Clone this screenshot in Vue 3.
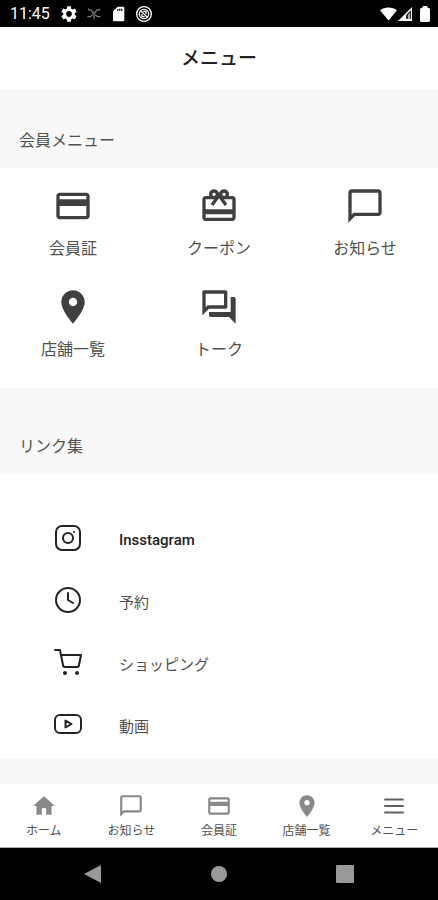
<template>
  <div class="screen">
    <div class="status-bar">
      <span class="time">11:45</span>
      <svg class="status-icon" viewBox="2 2 20 20">
        <path :d="icons.gear" />
      </svg>
      <svg class="status-icon dim" viewBox="0 0 24 24">
        <path d="M3 4l3 3M21 4l-3 3M7 5l5 7 5-7M12 12v8M2 16h5l3-3M22 16h-5l-3-3" fill="none" stroke="currentColor" stroke-width="2" />
      </svg>
      <svg class="status-icon" viewBox="0 0 24 24">
        <path d="M18 1h-8L3 8v13c0 1 1 2 2 2h13c1 0 2-1 2-2V3c0-1-1-2-2-2zM11 7H9V5h2zm3 0h-2V4h2zm3 0h-2V4h2z" />
      </svg>
      <svg class="status-icon ring" viewBox="0 0 24 24" fill="none" stroke="currentColor" stroke-width="2">
        <circle cx="12" cy="12" r="11" />
        <circle cx="12" cy="12" r="7" />
        <path d="M7 7l10 10M11 8h4v4M9 12v4h4" />
      </svg>
      <div class="signals">
        <svg class="wifi" viewBox="0 0 18 14">
          <path d="M9 14L0 3C5-1 13-1 18 3z" />
        </svg>
        <svg class="cell" viewBox="0 0 15 14">
          <path d="M0 14L14 0v14z" />
          <path d="M8 12V8l5-5v9z" fill="#333333" />
          <path d="M10 12V8l2-2v6z" fill="#aaaaaa" />
        </svg>
        <svg class="battery" viewBox="0 0 10 16">
          <path d="M3 0h4l1 2h1l1 1v12l-1 1H1l-1-1V3l1-1h1z" />
        </svg>
      </div>
    </div>

    <header class="header">
      <h1>メニュー</h1>
    </header>

    <main>
      <h2 class="section-title">会員メニュー</h2>
      <div class="menu-grid">
        <button v-for="item in menuItems" :key="item.label" type="button" class="menu-item">
          <svg viewBox="0 0 24 24"><path :d="icons[item.icon]" /></svg>
          <span>{{ item.label }}</span>
        </button>
      </div>

      <h2 class="section-title links-title">リンク集</h2>
      <ul class="link-list">
        <li v-for="link in links" :key="link.label">
          <a href="#" :class="{ latin: link.icon === 'instagram' }">
            <svg v-if="link.icon === 'instagram'" viewBox="0 0 28 28">
              <rect x="2" y="2" width="24" height="24" rx="6" />
              <circle cx="14" cy="14" r="5" />
              <circle class="dot" cx="20" cy="8" r="1" />
            </svg>
            <svg v-else-if="link.icon === 'clock'" viewBox="0 0 28 28">
              <circle cx="14" cy="14" r="12" />
              <path d="M14 7v7l5 3" />
            </svg>
            <svg v-else-if="link.icon === 'cart'" viewBox="0 0 28 28">
              <path d="M1 2h5l3 15c0 1 1 2 2 2h12c1 0 2-1 2-2l2-10H8" />
              <circle class="dot" cx="11" cy="25" r="2" />
              <circle class="dot" cx="23" cy="25" r="2" />
            </svg>
            <svg v-else viewBox="0 0 28 28">
              <rect x="1" y="5" width="26" height="18" rx="5" />
              <path d="M11.5 10.5v7l6-3.5z" />
            </svg>
            <span>{{ link.label }}</span>
          </a>
        </li>
      </ul>
    </main>

    <nav class="tab-bar">
      <button v-for="tab in tabs" :key="tab.label" type="button" :class="{ active: tab.icon === 'menu' }">
        <svg viewBox="0 0 24 24"><path :d="icons[tab.icon]" /></svg>
        <span>{{ tab.label }}</span>
      </button>
    </nav>

    <div class="system-nav">
      <button type="button" aria-label="戻る">
        <svg viewBox="0 0 18 18"><path d="M0 9L17 0v18z" /></svg>
      </button>
      <button type="button" aria-label="ホーム画面">
        <svg viewBox="0 0 18 18"><circle cx="9" cy="9" r="8" /></svg>
      </button>
      <button type="button" aria-label="アプリ履歴">
        <svg viewBox="0 0 18 18"><rect width="18" height="18" rx="1" /></svg>
      </button>
    </div>
  </div>
</template>

<script setup>
// アイコンのパス (24x24)
const icons = {
  gear: "M19.14 12.94c.04-.3.06-.61.06-.94s-.02-.64-.07-.94l2.03-1.58c.18-.14.23-.41.12-.61l-1.92-3.32c-.12-.22-.37-.29-.59-.22l-2.39.96c-.5-.38-1.03-.7-1.62-.94L14.4 2.81c-.04-.24-.24-.41-.48-.41h-3.84c-.24 0-.43.17-.47.41l-.36 2.54c-.59.24-1.13.57-1.62.94l-2.39-.96c-.22-.08-.47 0-.59.22L2.74 8.87c-.12.21-.08.47.12.61l2.03 1.58c-.05.3-.09.63-.09.94s.02.64.07.94l-2.03 1.58c-.18.14-.23.41-.12.61l1.92 3.32c.12.22.37.29.59.22l2.39-.96c.5.38 1.03.7 1.62.94l.36 2.54c.05.24.24.41.48.41h3.84c.24 0 .44-.17.47-.41l.36-2.54c.59-.24 1.13-.56 1.62-.94l2.39.96c.22.08.47 0 .59-.22l1.92-3.32c.12-.22.07-.47-.12-.61l-2.01-1.58zM12 15.6c-1.98 0-3.6-1.62-3.6-3.6s1.62-3.6 3.6-3.6 3.6 1.62 3.6 3.6-1.62 3.6-3.6 3.6z",
  card: "M20 4H4c-1.11 0-1.99.89-1.99 2L2 18c0 1.11.89 2 2 2h16c1.11 0 2-.89 2-2V6c0-1.11-.89-2-2-2zm0 14H4v-6h16v6zm0-10H4V6h16v2z",
  gift: "M20 6h-2.18c.11-.31.18-.65.18-1 0-1.66-1.34-3-3-3-1.05 0-1.96.54-2.5 1.35l-.5.67-.5-.68C10.96 2.54 10.05 2 9 2 7.34 2 6 3.34 6 5c0 .35.07.69.18 1H4c-1.11 0-1.99.89-1.99 2L2 19c0 1.11.89 2 2 2h16c1.11 0 2-.89 2-2V8c0-1.11-.89-2-2-2zm-5-2c.55 0 1 .45 1 1s-.45 1-1 1-1-.45-1-1 .45-1 1-1zM9 4c.55 0 1 .45 1 1s-.45 1-1 1-1-.45-1-1 .45-1 1-1zm11 15H4v-2h16v2zm0-5H4V8h5.08L7 10.83 8.62 12 11 8.76l1-1.36 1 1.36L15.38 12 17 10.83 14.92 8H20v6z",
  chat: "M20 2H4c-1.1 0-2 .9-2 2v18l4-4h14c1.1 0 2-.9 2-2V4c0-1.1-.9-2-2-2zm0 14H5.2L4 17.2V4h16v12z",
  pin: "M12 2C8.13 2 5 5.13 5 9c0 5.25 7 13 7 13s7-7.75 7-13c0-3.87-3.13-7-7-7zm0 9.5c-1.38 0-2.5-1.12-2.5-2.5s1.12-2.5 2.5-2.5 2.5 1.12 2.5 2.5-1.12 2.5-2.5 2.5z",
  talk: "M15 4v7H5.17L4 12.17V4h11m1-2H3c-.55 0-1 .45-1 1v14l4-4h10c.55 0 1-.45 1-1V3c0-.55-.45-1-1-1zm5 4h-2v9H6v2c0 .55.45 1 1 1h11l4 4V7c0-.55-.45-1-1-1z",
  home: "M10 20v-6h4v6h5v-8h3L12 3 2 12h3v8z",
  menu: "M3 5h18v2H3zM3 11h18v2H3zM3 17h18v2H3z",
};

const menuItems = [
  { label: "会員証", icon: "card" },
  { label: "クーポン", icon: "gift" },
  { label: "お知らせ", icon: "chat" },
  { label: "店舗一覧", icon: "pin" },
  { label: "トーク", icon: "talk" },
];

const links = [
  { label: "Insstagram", icon: "instagram" },
  { label: "予約", icon: "clock" },
  { label: "ショッピング", icon: "cart" },
  { label: "動画", icon: "video" },
];

const tabs = [
  { label: "ホーム", icon: "home" },
  { label: "お知らせ", icon: "chat" },
  { label: "会員証", icon: "card" },
  { label: "店舗一覧", icon: "pin" },
  { label: "メニュー", icon: "menu" },
];
</script>

<style>
body {
  margin: 0;
  background: #f8f8f8;
}
</style>

<style scoped>
.screen {
  display: flex;
  flex-direction: column;
  min-height: 100vh;
  background: #f8f8f8;
  color: #505050;
  font-family: Roboto, "Noto Sans CJK JP", sans-serif;
}

svg {
  display: block;
  flex: none;
  fill: currentColor;
}

button {
  margin: 0;
  padding: 0;
  border: 0;
  background: none;
  color: inherit;
  font: inherit;
  cursor: pointer;
}

h1,
h2 {
  margin: 0;
}

.status-bar {
  display: flex;
  align-items: center;
  gap: 9px;
  height: 27px;
  padding: 0 8px 0 10px;
  background: #000;
  color: #fff;

  .time {
    margin-right: 2px;
    font-size: 16px;
    font-weight: 400;
    line-height: 27px;
  }

  .status-icon {
    width: 16px;
    height: 16px;
  }

  .dim {
    color: #777;
  }

  .ring {
    fill: none;
  }
}

.signals {
  display: flex;
  align-items: center;
  gap: 1px;
  margin-left: auto;

  .wifi {
    width: 17px;
    height: 14px;
  }

  .cell {
    width: 15px;
    height: 14px;
    margin-right: 6px;
  }

  .battery {
    width: 10px;
    height: 16px;
  }
}

.header {
  padding: 17px 0 15px;
  background: #fff;
  text-align: center;

  h1 {
    font-size: 19px;
    font-weight: 500;
    line-height: 30px;
    color: #222;
  }
}

.section-title {
  padding: 40px 19px 15px;
  font-size: 16px;
  font-weight: 400;
  line-height: 24px;
}

.links-title {
  padding-top: 47px;
}

.menu-grid {
  display: grid;
  grid-template-columns: repeat(3, 1fr);
  row-gap: 26px;
  padding: 18px 0 26px;
  background: #fff;
}

.menu-item {
  display: flex;
  flex-direction: column;
  align-items: center;
  gap: 11px;

  svg {
    width: 40px;
    height: 40px;
    color: #404040;
  }

  span {
    font-size: 16px;
    line-height: 24px;
  }
}

.link-list {
  margin: 0;
  padding: 33px 0 4px;
  background: #fff;
  list-style: none;

  a {
    display: flex;
    align-items: center;
    gap: 37px;
    height: 62px;
    padding: 0 54px;
    color: #505050;
    font-size: 15px;
    text-decoration: none;
  }

  span {
    padding-top: 3px;
  }

  svg {
    width: 28px;
    height: 28px;
    fill: none;
    stroke: #222;
    stroke-width: 2;
    stroke-linecap: round;
    stroke-linejoin: round;
  }

  .dot {
    fill: #222;
    stroke: none;
  }

  .latin {
    color: #222;
    font-weight: 500;
  }
}

.tab-bar {
  display: grid;
  grid-template-columns: repeat(5, 1fr);
  margin-top: auto;
  padding: 9px 0 6px;
  border-bottom: 1px solid #aaa;
  background: #fff;

  button {
    display: flex;
    flex-direction: column;
    align-items: center;
    gap: 2px;
  }

  svg {
    width: 26px;
    height: 26px;
    color: #888;
  }

  span {
    font-size: 12px;
    line-height: 20px;
  }

  .active svg {
    color: #606060;
  }
}

.system-nav {
  display: flex;
  justify-content: center;
  gap: 108px;
  padding: 17px 0;
  background: #000;
  color: #999;

  svg {
    width: 18px;
    height: 18px;
  }
}
</style>
